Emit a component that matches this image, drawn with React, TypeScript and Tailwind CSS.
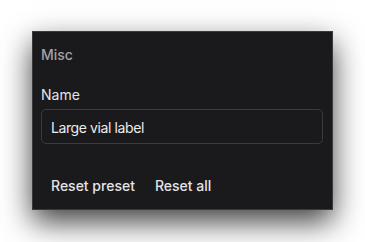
export default function App() {
  return (
    <div className="min-h-[242px] w-[365px] bg-white pt-[31px] pl-[32px]" style={{ fontFamily: 'Inter, "Noto Sans", sans-serif' }}>
      <div className="flex h-[179px] w-[301px] flex-col border border-[#3a3a3c] bg-[#1a1a1c] px-2 pt-[13px] shadow-[0_12px_28px_rgba(0,0,0,0.75)]">
        <div className="h-5 text-[14px] leading-5 font-medium text-[#a1a1a6]">Misc</div>
        <div className="mt-5 h-5 text-[14px] leading-5 text-[#e4e4e7]">Name</div>
        <div className="mt-1 flex h-[35px] w-[282px] items-center rounded-[5px] border border-[#3a3a3f] px-[9px] pt-[2px] text-[14px] tracking-[-0.4px] text-[#ececee]">
          Large vial label
        </div>
        <div className="mt-[25px] flex">
          <button className="h-8 px-2.5 text-[14px] font-medium text-[#e4e4e7]">Reset preset</button>
          <button className="h-8 px-2.5 text-[14px] font-medium text-[#e4e4e7]">Reset all</button>
        </div>
      </div>
    </div>
  );
}
